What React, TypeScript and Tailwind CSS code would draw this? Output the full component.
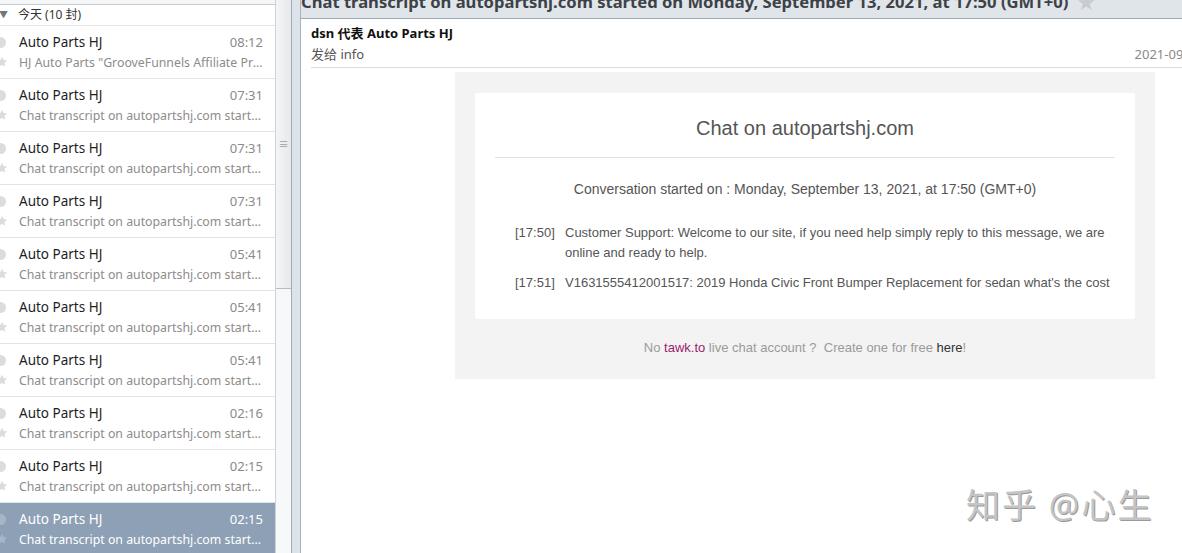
import React from "react";

type Mail = { time: string; subject: string };

const mails: Mail[] = [
    { time: "08:12", subject: 'HJ Auto Parts "GrooveFunnels Affiliate Program" Invitation' },
    { time: "07:31", subject: "Chat transcript on autopartshj.com started on Monday" },
    { time: "07:31", subject: "Chat transcript on autopartshj.com started on Monday" },
    { time: "07:31", subject: "Chat transcript on autopartshj.com started on Monday" },
    { time: "05:41", subject: "Chat transcript on autopartshj.com started on Monday" },
    { time: "05:41", subject: "Chat transcript on autopartshj.com started on Monday" },
    { time: "05:41", subject: "Chat transcript on autopartshj.com started on Monday" },
    { time: "02:16", subject: "Chat transcript on autopartshj.com started on Monday" },
    { time: "02:15", subject: "Chat transcript on autopartshj.com started on Monday" },
    { time: "02:15", subject: "Chat transcript on autopartshj.com started on Monday" },
];

function Star({ className }: { className: string }) {
    return (
        <svg viewBox="0 0 12 12" className={className}>
            <path d="M6 0.8l1.55 3.3 3.6.45-2.65 2.5.68 3.57L6 8.9 2.82 10.62l.68-3.57L.85 4.55l3.6-.45z" fill="currentColor" />
        </svg>
    );
}

function MailRow({ mail, selected }: { mail: Mail; selected: boolean }) {
    return (
        <div
            className={`flex h-[53px] shrink-0 border-b ${
                selected ? "bg-[#8da0b5] border-[#8da0b5]" : "bg-white border-[#e3e3e3]"
            }`}
        >
            <div className="w-[19px] shrink-0 pt-[11px]">
                <div className={`-ml-[5px] w-[11px] h-[11px] rounded-full ${selected ? "bg-[#a7b6c6]" : "bg-[#dcdcdc]"}`} />
                <Star className={`-ml-[4px] mt-[8px] w-[12px] h-[12px] ${selected ? "text-[#a7b6c6]" : "text-[#dcdcdc]"}`} />
            </div>
            <div className="flex-1 min-w-0 pr-[12px] pt-[6px]">
                <div className="flex items-center justify-between h-[21px]">
                    <span className={`text-[13.5px] ${selected ? "text-white" : "text-[#1e1e1e]"}`}>Auto Parts HJ</span>
                    <span className={`text-[13px] ${selected ? "text-white" : "text-[#8a8a8a]"}`}>{mail.time}</span>
                </div>
                <div
                    className={`h-[19px] leading-[19px] text-[12.3px] truncate ${
                        selected ? "text-white" : "text-[#8c8c8c]"
                    }`}
                >
                    {mail.subject}
                </div>
            </div>
        </div>
    );
}

export default function App() {
    return (
        <div
            className="relative w-[1182px] h-[553px] flex overflow-hidden bg-white"
            style={{ fontFamily: '"Noto Sans", "Noto Sans CJK SC", sans-serif' }}
        >
            {/* mail list */}
            <div className="w-[275px] shrink-0 flex flex-col overflow-hidden">
                <div className="h-[5px] shrink-0 border-b border-[#c9cdd2] bg-[#f4f6f8]" />
                <div className="h-[21px] shrink-0 flex items-center border-b border-[#e3e3e3]">
                    <span className="w-[19px] text-[9px] text-[#6d7680] -ml-[1px]">▼</span>
                    <span className="text-[12px] text-[#333]">今天 (10 封)</span>
                </div>
                {mails.map((m, i) => (
                    <MailRow key={i} mail={m} selected={i === mails.length - 1} />
                ))}
            </div>

            {/* scrollbar */}
            <div className="w-[16px] shrink-0 border-l border-[#cfd3d7] bg-[#f7f8f9] flex flex-col">
                <div className="h-[289px] bg-gradient-to-r from-[#f4f5f6] to-[#e6e8ea] border-b border-[#b7bcc1] flex items-center justify-center">
                    <span className="text-[10px] text-[#9aa0a6] leading-none">≡</span>
                </div>
            </div>

            {/* splitter */}
            <div className="w-[10px] shrink-0 border-l border-[#a3abb3] border-r border-r-[#aab2ba] bg-[#dce3ea]" />

            {/* reading pane */}
            <div className="flex-1 min-w-0 flex flex-col overflow-hidden">
                <div className="h-[19px] shrink-0 bg-[#e0e5ea] border-b border-[#9fa8b1] overflow-hidden whitespace-nowrap flex items-start">
                    <span className="-mt-[10px] leading-[24px] text-[16.6px] font-bold text-[#3d4247]">
                        Chat transcript on autopartshj.com started on Monday, September 13, 2021, at 17:50 (GMT+0)
                    </span>
                    <span className="-mt-[10px] ml-[9px] leading-[24px] text-[18px] text-[#c8ccd0]">★</span>
                </div>

                <div className="flex-1 overflow-hidden">
                    <div className="w-[928px] ml-[10px]">
                        <div className="pt-[4px] h-[49px] border-b border-[#dcdcdc]">
                            <div className="text-[13px] font-bold text-[#111] leading-[20px]">dsn 代表 Auto Parts HJ</div>
                            <div className="flex justify-between leading-[20px] mt-[1px]">
                                <span className="text-[13px] text-[#555]">发给 info</span>
                                <span className="text-[13px] text-[#8a8a8a]">2021-09-14 01:50</span>
                            </div>
                        </div>

                        {/* email body */}
                        <div
                            className="ml-[144px] mt-[4px] w-[700px] h-[307px] bg-[#f3f3f3] pt-[21px] px-[20px]"
                            style={{ fontFamily: '"Liberation Sans", Arial, sans-serif' }}
                        >
                            <div className="bg-white h-[226px] rounded-[3px] px-[20px]">
                                <div className="pt-[23px] h-[65px] text-center text-[20px] leading-[24px] text-[#555] border-b border-[#e2e2e2]">
                                    Chat on autopartshj.com
                                </div>
                                <div className="mt-[21px] text-center text-[14px] leading-[20px] text-[#555]">
                                    Conversation started on : Monday, September 13, 2021, at 17:50 (GMT+0)
                                </div>
                                <div className="mt-[24px] pl-[20px] pr-[4px] flex flex-col gap-[10px] text-[13px] leading-[20px] text-[#555]">
                                    <div className="flex">
                                        <span className="w-[50px] shrink-0">[17:50]</span>
                                        <span>
                                            Customer Support: Welcome to our site, if you need help simply reply to this message, we are online and ready to help.
                                        </span>
                                    </div>
                                    <div className="flex">
                                        <span className="w-[50px] shrink-0">[17:51]</span>
                                        <span className="whitespace-nowrap">
                                            V1631555412001517: 2019 Honda Civic Front Bumper Replacement for sedan what's the cost
                                        </span>
                                    </div>
                                </div>
                            </div>
                            <div className="mt-[19px] text-center text-[13px] leading-[20px] text-[#9a9a9a]">
                                No <span className="text-[#9b1d6b]">tawk.to</span> live chat account ?&nbsp; Create one for free{" "}
                                <span className="text-[#333]">here</span>!
                            </div>
                        </div>
                    </div>
                </div>
            </div>

            {/* watermark */}
            <div
                className="absolute left-[966px] top-[484px] text-[34px] leading-[42px] text-[#c4c4c4] tracking-[2px]"
                style={{ textShadow: "1px 1px 0 #9a9a9a" }}
            >
                知乎 @心生
            </div>
        </div>
    );
}
